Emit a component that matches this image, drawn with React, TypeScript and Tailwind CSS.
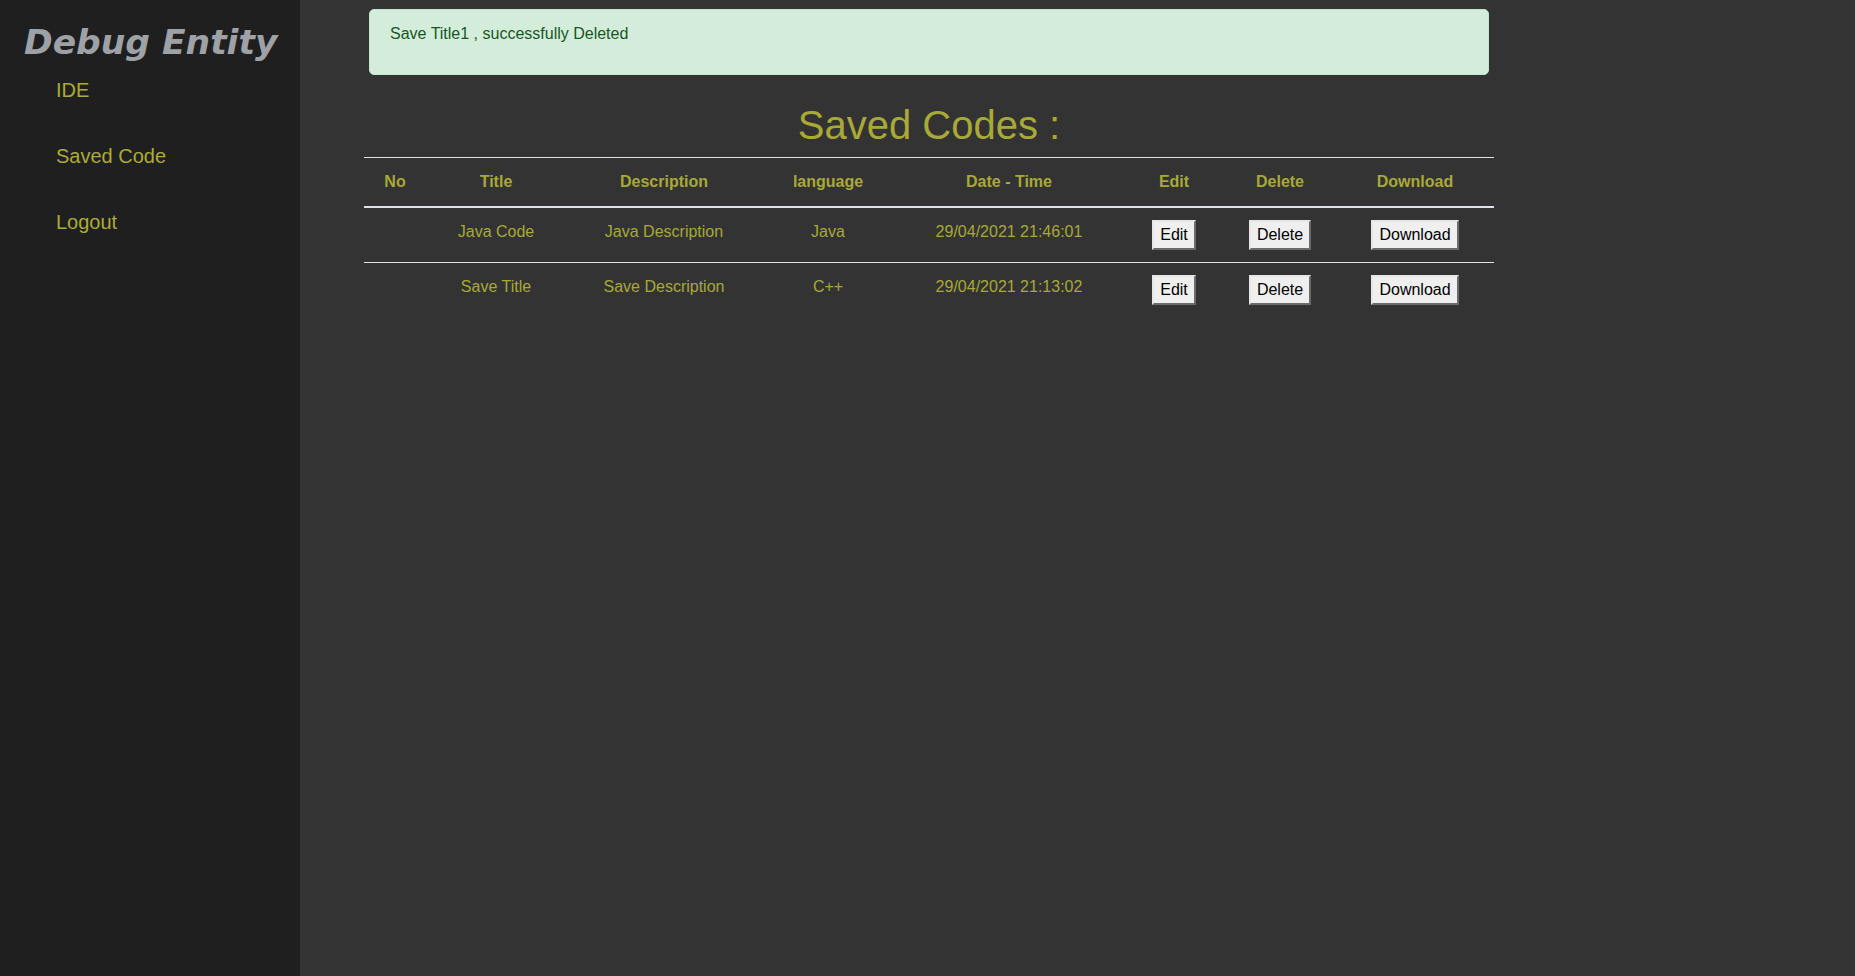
import React from "react";

const rows = [
  { no: "", title: "Java Code", desc: "Java Description", lang: "Java", dt: "29/04/2021 21:46:01" },
  { no: "", title: "Save Title", desc: "Save Description", lang: "C++", dt: "29/04/2021 21:13:02" },
];

function Btn({ children }: { children: React.ReactNode }) {
  return (
    <button className="h-[30px] px-[6px] py-px leading-[24px] text-[16px] text-black bg-[#efefef] border-2 border-solid border-t-[#e6e6e6] border-l-[#e6e6e6] border-r-[#6b6b6b] border-b-[#6b6b6b]">
      {children}
    </button>
  );
}

export default function App() {
  const th = "px-[12px] py-[12px] leading-[24px] text-[16px] font-bold text-center align-top border-t border-t-[#dee2e6] border-b-2 border-b-[#dee2e6]";
  const td = "px-[12px] py-[12px] leading-[24px] text-[16px] text-center align-top";
  return (
    <div className="flex h-[976px] w-full font-['Liberation_Sans',Arial,sans-serif]">
      <aside className="w-[300px] shrink-0 bg-[#1f1f1f]">
        <div className="pt-[22px] pl-[24px] text-[34.5px] leading-[40px] font-bold italic text-[#9ea1a5] font-['DejaVu_Sans',Verdana,sans-serif] whitespace-nowrap">
          Debug Entity
        </div>
        <nav className="mt-[16px] ml-[56px] flex flex-col gap-[42px] text-[20px] leading-[24px] text-[#adab36]">
          <a>IDE</a>
          <a>Saved Code</a>
          <a>Logout</a>
        </nav>
      </aside>
      <main className="flex-1 bg-[#333333] pl-[64px]">
        <div className="w-[1130px]">
          <div className="mt-[9px] mx-[5px] rounded-[5px] border border-[#c3e6cb] bg-[#d4edda] px-[20px] py-[12px] text-[16px] leading-[24px] text-[#155724]">
            <p className="mb-[16px]">Save Title1 , successfully Deleted</p>
          </div>
          <h1 className="mt-[26px] mb-[8px] text-center text-[40px] leading-[48px] text-[#a8a937]">Saved Codes :</h1>
          <table className="w-[1130px] table-fixed border-collapse text-[#a8a937]">
            <colgroup>
              <col className="w-[62px]" />
              <col className="w-[140px]" />
              <col className="w-[196px]" />
              <col className="w-[132px]" />
              <col className="w-[230px]" />
              <col className="w-[100px]" />
              <col className="w-[112px]" />
              <col className="w-[158px]" />
            </colgroup>
            <thead>
              <tr>
                <th className={th}>No</th>
                <th className={th}>Title</th>
                <th className={th}>Description</th>
                <th className={th}>language</th>
                <th className={th}>Date - Time</th>
                <th className={th}>Edit</th>
                <th className={th}>Delete</th>
                <th className={th}>Download</th>
              </tr>
            </thead>
            <tbody>
              {rows.map((r, i) => (
                <tr key={i} className={i > 0 ? "border-t border-t-[#dee2e6]" : ""}>
                  <td className={td}>{r.no}</td>
                  <td className={td}>{r.title}</td>
                  <td className={td}>{r.desc}</td>
                  <td className={td}>{r.lang}</td>
                  <td className={td}>{r.dt}</td>
                  <td className={td}><Btn>Edit</Btn></td>
                  <td className={td}><Btn>Delete</Btn></td>
                  <td className={td}><Btn>Download</Btn></td>
                </tr>
              ))}
            </tbody>
          </table>
        </div>
      </main>
    </div>
  );
}
